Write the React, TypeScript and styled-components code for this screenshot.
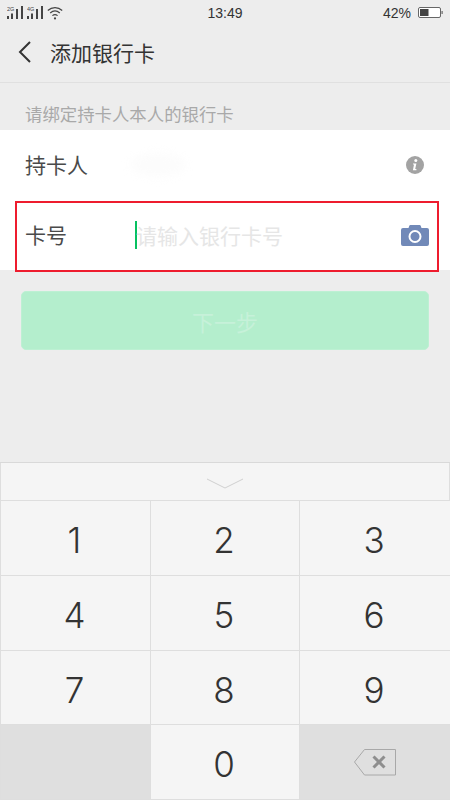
import React from "react";
import styled, { createGlobalStyle } from "styled-components";

const Global = createGlobalStyle`
  html, body { margin: 0; padding: 0; background: #ededed; }
  * { box-sizing: border-box; }
`;
const FONT = `"Liberation Sans", "Noto Sans CJK SC", sans-serif`;
const Page = styled.div`
  position: relative; width: 450px; height: 800px; overflow: hidden;
  background: #ededed; font-family: ${FONT}; display: flex; flex-direction: column;
`;
const StatusBar = styled.div`
  height: 25px; padding: 0 7px; display: grid; grid-template-columns: 1fr auto 1fr;
  align-items: center; color: #333; font-size: 14px;
`;
const Signals = styled.div`display: flex; align-items: center; gap: 4px;`;
const Right = styled.div`display: flex; justify-content: flex-end; align-items: center; gap: 7px; font-size: 14px;`;
const Header = styled.div`
  height: 58px; border-bottom: 1px solid #e0e0e0; display: flex; align-items: center;
  padding: 0 0 4px 18px; gap: 19px; font-size: 21px; color: #333;
`;
const Caption = styled.div`
  height: 47px; padding: 20px 0 0 25px; font-size: 17.4px; line-height: 24px; color: #a9a9a9;
`;
const List = styled.div`background: #fff; display: flex; flex-direction: column;`;
const Row = styled.div`
  height: 70px; display: flex; align-items: center; padding: 0 21px 0 25px; color: #4a4a4a; font-size: 21px;
`;
const Label = styled.div`width: 110px; flex: none; margin-top: -2px;`;
const Field = styled.div`flex: 1; display: flex; align-items: center; min-width: 0;`;
const BlurredName = styled.div`
  width: 56px; height: 24px; margin-left: -5px; border-radius: 50%; background: #fcfcfc; filter: blur(4px);
`;
const Caret = styled.div`width: 2px; height: 28px; background: #07c160; margin-right: -1px;`;
const Placeholder = styled.div`font-size: 21px; color: #e6e6e6;`;
const InfoIcon = styled.svg`margin-right: 5px;`;
const Highlight = styled.div`
  position: absolute; left: 15px; top: 201px; width: 424px; height: 71px;
  border: 2px solid #ee1c2e; pointer-events: none;
`;
const NextButton = styled.div`
  margin: 21px 21px 0; height: 59px; border-radius: 5px; background: #b4eecd; border: 1px solid #bdf0d3;
  display: flex; align-items: center; justify-content: center; font-size: 22px; color: #c6f1d9;
`;
const Keyboard = styled.div`
  margin-top: auto; height: 338px; background: #f5f5f5; border-top: 1px solid #d9d9d9;
  display: flex; flex-direction: column;
`;
const Collapse = styled.div`
  height: 37px; display: flex; justify-content: center; padding-top: 15px;
  border-left: 1px solid #dedede; border-right: 1px solid #dedede;
`;
const Keys = styled.div`
  flex: 1; display: grid; grid-template-columns: 150px 149px 151px; grid-template-rows: 75px 75px 74px 1fr;
  border-bottom: 1px solid #dedede; border-right: 1px solid #dedede;
`;
const Key = styled.div<{ $dark?: boolean }>`
  display: flex; align-items: center; justify-content: center; font-size: 35px; font-weight: 300; color: #333;
  font-family: "Inter", ${FONT};
  background: ${(p) => (p.$dark ? "#dfdfdf" : "#f5f5f5")};
  border-top: 1px solid #dedede;
  border-left: 1px solid #dedede;
`;
const Num = styled.span`position: relative; top: 2px; left: -1px;`;

const Signal = ({ label }: { label: string }) => (
  <svg width="16" height="13" viewBox="0 0 16 13">
    <text x="0" y="5" fontSize="5.5" fill="#444" fontFamily="Liberation Sans">{label}</text>
    <rect x="0" y="10" width="2" height="3" fill="#444" />
    <rect x="4" y="7.5" width="2" height="5.5" fill="#444" />
    <rect x="9" y="3" width="2" height="10" fill="#444" />
    <rect x="14" y="0" width="2" height="13" fill="#444" />
  </svg>
);

export default function App() {
  return (
    <Page>
      <Global />
      <StatusBar>
        <Signals>
          <Signal label="2G" />
          <Signal label="4G" />
          <svg width="16" height="14" viewBox="0 0 16 14" fill="none" stroke="#444" strokeWidth="1.2">
            <path d="M.8 4.5C5 .6 11 .6 15.2 4.5" />
            <path d="M3.2 7c3-2.6 6.6-2.6 9.6 0" />
            <path d="M5.4 9.6c1.7-1.4 3.5-1.4 5.2 0" />
            <circle cx="8" cy="12.4" r="1.1" fill="#444" stroke="none" />
          </svg>
        </Signals>
        <div>13:49</div>
        <Right>
          <span>42%</span>
          <svg width="25" height="13" viewBox="0 0 25 13">
            <rect x="0.5" y="1.5" width="22" height="10" rx="1.5" fill="#fff" stroke="#666" />
            <rect x="2" y="3" width="8.5" height="7" fill="#444" />
            <rect x="23.5" y="5" width="1.2" height="3" fill="#666" />
          </svg>
        </Right>
      </StatusBar>
      <Header>
        <svg width="13" height="22" viewBox="0 0 13 22" fill="none" stroke="#333" strokeWidth="2">
          <path d="M12 1 2 11l10 10" />
        </svg>
        <span>添加银行卡</span>
      </Header>
      <Caption>请绑定持卡人本人的银行卡</Caption>
      <List>
        <Row>
          <Label>持卡人</Label>
          <Field>
            <BlurredName />
          </Field>
          <InfoIcon width="18" height="18" viewBox="0 0 18 18">
            <circle cx="9" cy="9" r="9" fill="#a3a3a3" />
            <circle cx="9.8" cy="4.6" r="1.5" fill="#fff" />
            <path d="M7 7.4h3.4L9.2 13h1.2v1.2H6.9L8 8.6H7z" fill="#fff" />
          </InfoIcon>
        </Row>
        <Row>
          <Label>卡号</Label>
          <Field>
            <Caret />
            <Placeholder>请输入银行卡号</Placeholder>
          </Field>
          <svg width="28" height="21" viewBox="0 0 28 21">
            <path d="M2 3h5.5l.8-2.2C8.500.3 8.900 0 9.300 0h9.400c.4 0 .8.300 1 .8l.8 2.200H26a2 2 0 0 1 2 2v14a2 2 0 0 1-2 2H2a2 2 0 0 1-2-2V5a2 2 0 0 1 2-2z" fill="#7189b8" />
            <circle cx="14" cy="11.500" r="5.500" fill="none" stroke="#fff" strokeWidth="2" />
          </svg>
        </Row>
      </List>
      <Highlight />
      <NextButton>下一步</NextButton>
      <Keyboard>
        <Collapse>
          <svg width="36" height="12" viewBox="0 0 36 12" fill="none" stroke="#cfcfcf" strokeWidth="1">
            <path d="M0 1l18 9 18-9" />
          </svg>
        </Collapse>
        <Keys>
          {["1", "2", "3", "4", "5", "6", "7", "8", "9"].map((n) => (
            <Key key={n}><Num>{n}</Num></Key>
          ))}
          <Key $dark />
          <Key><Num>0</Num></Key>
          <Key $dark>
            <svg width="42" height="27" viewBox="0 0 42 27" fill="none">
              <path d="M10.500.5h31V26h-31L.5 13z" stroke="#a8a8a8" strokeWidth="1" />
              <path d="M19.500 7.500 30.500 18.500M30.500 7.500 19.500 18.500" stroke="#8e8e8e" strokeWidth="3" />
            </svg>
          </Key>
        </Keys>
      </Keyboard>
    </Page>
  );
}
